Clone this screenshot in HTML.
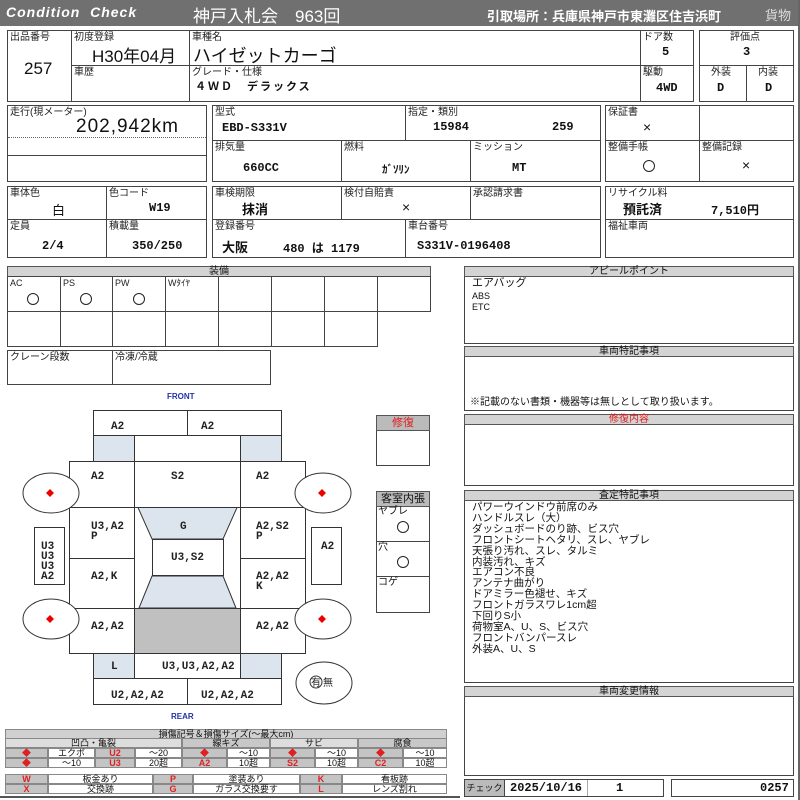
<!DOCTYPE html>
<html><head><meta charset="utf-8">
<style>
*{margin:0;padding:0;box-sizing:border-box}
body{width:800px;height:800px;background:#fff;position:relative;overflow:hidden;font-family:"Liberation Sans","Noto Sans CJK JP",sans-serif;color:#111}
div{position:absolute}
.c{border:1px solid #444}
.l{font-size:10px;line-height:11px;left:2px;top:1px;white-space:nowrap;color:#222}
.v{font-family:"Liberation Mono","Noto Sans CJK JP",monospace;font-weight:bold;font-size:12px;white-space:nowrap}
.h{background:#d4d4d4;border:1px solid #555;font-size:10px;line-height:9px;text-align:center}
.t{font-size:11px;line-height:12px;white-space:nowrap}
.g{background:#c4c4c4}
.r{color:#e02020;font-weight:bold}
.o{width:12px;height:12px;border:1.5px solid #222;border-radius:50%}
.lg div{font-size:9px;line-height:9px;text-align:center;border:1px solid #888;white-space:nowrap}
</style></head><body>
<!-- header -->
<div style="left:0;top:0;width:800px;height:26px;background:#707070"></div>
<div style="left:6px;top:4px;color:#fff;font-style:italic;font-weight:bold;font-size:14px;letter-spacing:1px">Condition&nbsp;&nbsp;Check</div>
<div style="left:193px;top:2px;color:#fff;font-size:17px">神戸入札会　963回</div>
<div style="left:487px;top:6px;color:#fff;font-size:13px;font-weight:bold">引取場所：兵庫県神戸市東灘区住吉浜町</div>
<div style="left:765px;top:5px;color:#ddd;font-size:13px">貨物</div>

<!-- top block -->
<div class="c" style="left:7px;top:30px;width:65px;height:72px"><div class="l">出品番号</div><div style="left:16px;top:28px;font-size:17px">257</div></div>
<div class="c" style="left:71px;top:30px;width:119px;height:36px"><div class="l">初度登録</div><div style="left:20px;top:11px;font-size:17px">H30年04月</div></div>
<div class="c" style="left:71px;top:65px;width:119px;height:37px"><div class="l">車歴</div></div>
<div class="c" style="left:189px;top:30px;width:452px;height:36px"><div class="l">車種名</div><div style="left:3px;top:11px;font-size:18px">ハイゼットカーゴ</div></div>
<div class="c" style="left:189px;top:65px;width:452px;height:37px"><div class="l">グレード・仕様</div><div style="left:5px;top:12px;font-size:11px;font-weight:bold;letter-spacing:2px">４ＷＤ　デラックス</div></div>
<div class="c" style="left:640px;top:30px;width:54px;height:36px"><div class="l">ドア数</div><div class="v" style="left:21px;top:14px">5</div></div>
<div class="c" style="left:640px;top:65px;width:54px;height:37px"><div class="l">駆動</div><div class="v" style="left:15px;top:15px">4WD</div></div>
<div class="c" style="left:699px;top:30px;width:95px;height:36px"><div class="l" style="left:30px">評価点</div><div class="v" style="left:43px;top:14px">3</div></div>
<div class="c" style="left:699px;top:65px;width:48px;height:37px"><div class="l" style="left:11px">外装</div><div class="v" style="left:17px;top:15px">D</div></div>
<div class="c" style="left:746px;top:65px;width:48px;height:37px"><div class="l" style="left:11px">内装</div><div class="v" style="left:18px;top:15px">D</div></div>

<!-- block 2 -->
<div class="c" style="left:7px;top:105px;width:200px;height:77px"><div class="l">走行(現メーター)</div><div style="left:68px;top:10px;font-size:19px;letter-spacing:1px">202,942km</div>
<div style="left:0;top:31px;width:198px;border-top:1px dotted #666"></div>
<div style="left:0;top:49px;width:198px;border-top:1px solid #444"></div></div>
<div class="c" style="left:212px;top:105px;width:194px;height:36px"><div class="l">型式</div><div class="v" style="left:9px;top:15px">EBD-S331V</div></div>
<div class="c" style="left:405px;top:105px;width:196px;height:36px"><div class="l">指定・類別</div><div class="v" style="left:27px;top:14px">15984</div><div class="v" style="left:146px;top:14px">259</div></div>
<div class="c" style="left:212px;top:140px;width:130px;height:42px"><div class="l">排気量</div><div class="v" style="left:30px;top:20px">660CC</div></div>
<div class="c" style="left:341px;top:140px;width:130px;height:42px"><div class="l">燃料</div><div class="v" style="left:40px;top:20px;font-size:11px">ｶﾞｿﾘﾝ</div></div>
<div class="c" style="left:470px;top:140px;width:131px;height:42px"><div class="l">ミッション</div><div class="v" style="left:41px;top:20px">MT</div></div>
<div class="c" style="left:605px;top:105px;width:95px;height:36px"><div class="l">保証書</div><div style="left:37px;top:13px;font-size:14px">×</div></div>
<div class="c" style="left:699px;top:105px;width:95px;height:36px"></div>
<div class="c" style="left:605px;top:140px;width:95px;height:42px"><div class="l">整備手帳</div><div class="o" style="left:37px;top:19px"></div></div>
<div class="c" style="left:699px;top:140px;width:95px;height:42px"><div class="l">整備記録</div><div style="left:42px;top:16px;font-size:14px">×</div></div>

<!-- block 3 -->
<div class="c" style="left:7px;top:186px;width:100px;height:34px"><div class="l">車体色</div><div style="left:44px;top:13px;font-size:13px">白</div></div>
<div class="c" style="left:106px;top:186px;width:101px;height:34px"><div class="l">色コード</div><div class="v" style="left:42px;top:14px">W19</div></div>
<div class="c" style="left:7px;top:219px;width:100px;height:39px"><div class="l">定員</div><div class="v" style="left:34px;top:19px">2/4</div></div>
<div class="c" style="left:106px;top:219px;width:101px;height:39px"><div class="l">積載量</div><div class="v" style="left:25px;top:19px">350/250</div></div>
<div class="c" style="left:212px;top:186px;width:130px;height:34px"><div class="l">車検期限</div><div style="left:29px;top:12px;font-size:13px;font-weight:bold">抹消</div></div>
<div class="c" style="left:341px;top:186px;width:130px;height:34px"><div class="l">検付自賠責</div><div style="left:60px;top:12px;font-size:14px">×</div></div>
<div class="c" style="left:470px;top:186px;width:131px;height:34px"><div class="l">承認請求書</div></div>
<div class="c" style="left:212px;top:219px;width:194px;height:39px"><div class="l">登録番号</div><div style="left:9px;top:17px;font-size:13px;font-weight:bold">大阪</div><div class="v" style="left:70px;top:19px">480 は 1179</div></div>
<div class="c" style="left:405px;top:219px;width:196px;height:39px"><div class="l">車台番号</div><div class="v" style="left:11px;top:19px">S331V-0196408</div></div>
<div class="c" style="left:605px;top:186px;width:189px;height:34px"><div class="l">リサイクル料</div><div style="left:17px;top:12px;font-size:13px;font-weight:bold">預託済</div><div class="v" style="left:105px;top:14px">7,510円</div></div>
<div class="c" style="left:605px;top:219px;width:189px;height:39px"><div class="l">福祉車両</div></div>

<!-- equipment -->
<div class="h" style="left:7px;top:266px;width:424px;height:11px">装備</div>
<div class="c" style="left:7px;top:276px;width:54px;height:36px"><div class="l" style="font-size:9px">AC</div><div class="o" style="left:19px;top:16px"></div></div>
<div class="c" style="left:60px;top:276px;width:53px;height:36px"><div class="l" style="font-size:9px">PS</div><div class="o" style="left:19px;top:16px"></div></div>
<div class="c" style="left:112px;top:276px;width:54px;height:36px"><div class="l" style="font-size:9px">PW</div><div class="o" style="left:20px;top:16px"></div></div>
<div class="c" style="left:165px;top:276px;width:54px;height:36px"><div class="l" style="font-size:9px">Wﾀｲﾔ</div></div>
<div class="c" style="left:218px;top:276px;width:54px;height:36px"></div>
<div class="c" style="left:271px;top:276px;width:54px;height:36px"></div>
<div class="c" style="left:324px;top:276px;width:54px;height:36px"></div>
<div class="c" style="left:377px;top:276px;width:54px;height:36px"></div>
<div class="c" style="left:7px;top:311px;width:54px;height:36px"></div>
<div class="c" style="left:60px;top:311px;width:53px;height:36px"></div>
<div class="c" style="left:112px;top:311px;width:54px;height:36px"></div>
<div class="c" style="left:165px;top:311px;width:54px;height:36px"></div>
<div class="c" style="left:218px;top:311px;width:54px;height:36px"></div>
<div class="c" style="left:271px;top:311px;width:54px;height:36px"></div>
<div class="c" style="left:324px;top:311px;width:54px;height:36px"></div>
<div class="c" style="left:7px;top:350px;width:106px;height:35px"><div class="l">クレーン段数</div></div>
<div class="c" style="left:112px;top:350px;width:159px;height:35px"><div class="l">冷凍/冷蔵</div></div>

<!-- diagram -->
<div style="left:167px;top:392px;font-size:8px;font-weight:bold;color:#2233aa">FRONT</div>
<div style="left:171px;top:712px;font-size:8px;font-weight:bold;color:#2233aa">REAR</div>
<svg style="position:absolute;left:0;top:0" width="450" height="720">
<g stroke="#333" stroke-width="1" fill="#fff">
<rect x="93.5" y="410.5" width="94" height="25"/><rect x="187.5" y="410.5" width="94" height="25"/>
<rect x="93.5" y="435.5" width="41" height="26" fill="#dce4ee"/><rect x="240.5" y="435.5" width="41" height="26" fill="#dce4ee"/>
<rect x="134.5" y="435.5" width="106" height="26"/>
<rect x="69.5" y="461.5" width="65" height="46"/><rect x="134.5" y="461.5" width="106" height="46"/><rect x="240.5" y="461.5" width="65" height="46"/>
<rect x="69.5" y="507.5" width="65" height="51"/><rect x="240.5" y="507.5" width="65" height="51"/>
<rect x="69.5" y="558.5" width="65" height="50"/><rect x="240.5" y="558.5" width="65" height="50"/>
<rect x="134.5" y="507.5" width="106" height="101"/>
<polygon points="138,507.5 237,507.5 223,539 152,539" fill="#dce4ee"/>
<rect x="152.5" y="539.5" width="71" height="36"/>
<polygon points="152,576 223,576 236,608 139,608" fill="#dce4ee"/>
<rect x="69.5" y="608.5" width="65" height="45"/><rect x="134.5" y="608.5" width="106" height="45" fill="#c0c0c0"/><rect x="240.5" y="608.5" width="65" height="45"/>
<rect x="93.5" y="653.5" width="41" height="25" fill="#dce4ee"/><rect x="134.5" y="653.5" width="106" height="25"/><rect x="240.5" y="653.5" width="41" height="25" fill="#dce4ee"/>
<rect x="93.5" y="678.5" width="94" height="26"/><rect x="187.5" y="678.5" width="94" height="26"/>
<rect x="34.5" y="527.5" width="30" height="57"/><rect x="311.5" y="527.5" width="30" height="57"/>
<ellipse cx="51" cy="493" rx="28" ry="20"/><ellipse cx="51" cy="619" rx="28" ry="20"/>
<ellipse cx="323" cy="493" rx="28" ry="20"/><ellipse cx="323" cy="619" rx="28" ry="20"/>
<ellipse cx="324" cy="683" rx="28" ry="21"/>
<circle cx="316" cy="682" r="6"/>
</g>
<g fill="#e00"><path d="M50 489l4 4-4 4-4-4z"/><path d="M50 615l4 4-4 4-4-4z"/><path d="M322 489l4 4-4 4-4-4z"/><path d="M322 615l4 4-4 4-4-4z"/></g>
<g font-family="Liberation Mono,monospace" font-weight="bold" font-size="11" fill="#222">
<text x="111" y="429">A2</text><text x="201" y="429">A2</text>
<text x="91" y="479">A2</text><text x="171" y="479">S2</text><text x="256" y="479">A2</text>
<text x="91" y="529">U3,A2</text><text x="91" y="539">P</text>
<text x="180" y="529">G</text>
<text x="256" y="529">A2,S2</text><text x="256" y="539">P</text>
<text x="171" y="560">U3,S2</text>
<text x="91" y="579">A2,K</text><text x="256" y="579">A2,A2</text><text x="256" y="589">K</text>
<text x="91" y="629">A2,A2</text><text x="256" y="629">A2,A2</text>
<text x="111" y="669">L</text><text x="162" y="669">U3,U3,A2,A2</text>
<text x="111" y="698">U2,A2,A2</text><text x="201" y="698">U2,A2,A2</text>
<text x="41" y="549">U3</text><text x="41" y="559">U3</text><text x="41" y="569">U3</text><text x="41" y="579">A2</text>
<text x="321" y="549">A2</text>
</g>
<text x="311" y="686" font-size="10" fill="#222" font-family="Noto Sans CJK JP,sans-serif">有</text>
<text x="323" y="686" font-size="10" fill="#222" font-family="Noto Sans CJK JP,sans-serif">無</text>
</svg>
<div class="c" style="left:376px;top:415px;width:54px;height:51px"></div>
<div class="h" style="left:376px;top:415px;width:54px;height:16px;line-height:14px;color:#e02020;background:#bbb;font-size:11px">修復</div>
<div class="c" style="left:376px;top:491px;width:54px;height:122px"></div>
<div class="h" style="left:376px;top:491px;width:54px;height:16px;line-height:14px;background:#bbb;font-size:11px">客室内張</div>
<div class="c" style="left:376px;top:541px;width:54px;height:36px"></div>
<div class="t" style="left:378px;top:506px;font-size:10px">ヤブレ</div><div class="o" style="left:397px;top:521px"></div>
<div class="t" style="left:378px;top:542px;font-size:10px">穴</div><div class="o" style="left:397px;top:556px"></div>
<div class="t" style="left:378px;top:577px;font-size:10px">コゲ</div>

<!-- legend -->
<div class="lg">
<div style="left:5px;top:729px;width:442px;height:10px;background:#d0d0d0">損傷記号＆損傷サイズ(〜最大cm)</div>
<div style="left:5px;top:738px;width:177px;height:10px;background:#ddd">凹凸・亀裂</div>
<div style="left:182px;top:738px;width:88px;height:10px;background:#c8c8c8">線キズ</div>
<div style="left:270px;top:738px;width:88px;height:10px;background:#ddd">サビ</div>
<div style="left:358px;top:738px;width:89px;height:10px;background:#c8c8c8">腐食</div>
<div class="g r" style="left:5px;top:748px;width:43px;height:10px">◆</div><div style="left:48px;top:748px;width:47px;height:10px">エクボ</div><div class="g r" style="left:95px;top:748px;width:40px;height:10px">U2</div><div style="left:135px;top:748px;width:47px;height:10px">〜20</div>
<div class="g r" style="left:182px;top:748px;width:45px;height:10px">◆</div><div style="left:227px;top:748px;width:43px;height:10px">〜10</div><div class="g r" style="left:270px;top:748px;width:45px;height:10px">◆</div><div style="left:315px;top:748px;width:43px;height:10px">〜10</div><div class="g r" style="left:358px;top:748px;width:45px;height:10px">◆</div><div style="left:403px;top:748px;width:44px;height:10px">〜10</div>
<div class="g r" style="left:5px;top:758px;width:43px;height:10px">◆</div><div style="left:48px;top:758px;width:47px;height:10px">〜10</div><div class="g r" style="left:95px;top:758px;width:40px;height:10px">U3</div><div style="left:135px;top:758px;width:47px;height:10px">20超</div>
<div class="g r" style="left:182px;top:758px;width:45px;height:10px">A2</div><div style="left:227px;top:758px;width:43px;height:10px">10超</div><div class="g r" style="left:270px;top:758px;width:45px;height:10px">S2</div><div style="left:315px;top:758px;width:43px;height:10px">10超</div><div class="g r" style="left:358px;top:758px;width:45px;height:10px">C2</div><div style="left:403px;top:758px;width:44px;height:10px">10超</div>
<div class="g r" style="left:5px;top:774px;width:43px;height:10px">W</div><div style="left:48px;top:774px;width:105px;height:10px">板金あり</div><div class="g r" style="left:153px;top:774px;width:40px;height:10px">P</div><div style="left:193px;top:774px;width:107px;height:10px">塗装あり</div><div class="g r" style="left:300px;top:774px;width:42px;height:10px">K</div><div style="left:342px;top:774px;width:105px;height:10px">看板跡</div>
<div class="g r" style="left:5px;top:784px;width:43px;height:10px">X</div><div style="left:48px;top:784px;width:105px;height:10px">交換跡</div><div class="g r" style="left:153px;top:784px;width:40px;height:10px">G</div><div style="left:193px;top:784px;width:107px;height:10px">ガラス交換要す</div><div class="g r" style="left:300px;top:784px;width:42px;height:10px">L</div><div style="left:342px;top:784px;width:105px;height:10px">レンズ割れ</div>
</div>
<div style="left:0;top:796px;width:460px;height:2px;background:#555"></div>

<!-- right panels -->
<div class="c" style="left:464px;top:266px;width:330px;height:78px"></div>
<div class="h" style="left:464px;top:266px;width:330px;height:11px">アピールポイント</div>
<div class="t" style="left:472px;top:277px;font-size:11px">エアバッグ</div>
<div class="t" style="left:472px;top:290px;font-size:9px">ABS</div>
<div class="t" style="left:472px;top:301px;font-size:9px">ETC</div>
<div class="c" style="left:464px;top:346px;width:330px;height:65px"></div>
<div class="h" style="left:464px;top:346px;width:330px;height:11px">車両特記事項</div>
<div class="t" style="left:470px;top:397px;font-size:10px">※記載のない書類・機器等は無しとして取り扱います。</div>
<div class="c" style="left:464px;top:414px;width:330px;height:72px"></div>
<div class="h" style="left:464px;top:414px;width:330px;height:11px;color:#e02020">修復内容</div>
<div class="c" style="left:464px;top:490px;width:330px;height:193px"></div>
<div class="h" style="left:464px;top:490px;width:330px;height:11px">査定特記事項</div>
<div style="left:472px;top:502px;font-size:10.5px;line-height:10.9px;white-space:pre">パワーウインドウ前席のみ
ハンドルスレ（大）
ダッシュボードのり跡、ビス穴
フロントシートヘタリ、スレ、ヤブレ
天張り汚れ、スレ、タルミ
内装汚れ、キズ
エアコン不良
アンテナ曲がり
ドアミラー色褪せ、キズ
フロントガラスワレ1cm超
下回りS小
荷物室A、U、S、ビス穴
フロントバンパースレ
外装A、U、S</div>
<div class="c" style="left:464px;top:686px;width:330px;height:90px"></div>
<div class="h" style="left:464px;top:686px;width:330px;height:11px">車両変更情報</div>
<div class="c" style="left:464px;top:779px;width:200px;height:18px"></div>
<div style="left:464px;top:779px;width:41px;height:18px;background:#bbb;border:1px solid #444;font-size:9px;line-height:16px;text-align:center;white-space:nowrap;overflow:hidden">チェック</div>
<div class="v" style="left:510px;top:781px">2025/10/16</div>
<div style="left:587px;top:780px;width:1px;height:16px;background:#aaa"></div>
<div class="v" style="left:616px;top:781px">1</div>
<div class="c" style="left:671px;top:779px;width:123px;height:18px"><div class="v" style="left:88px;top:1px">0257</div></div>
<div style="left:798px;top:0;width:2px;height:800px;background:#666"></div>
</body></html>
